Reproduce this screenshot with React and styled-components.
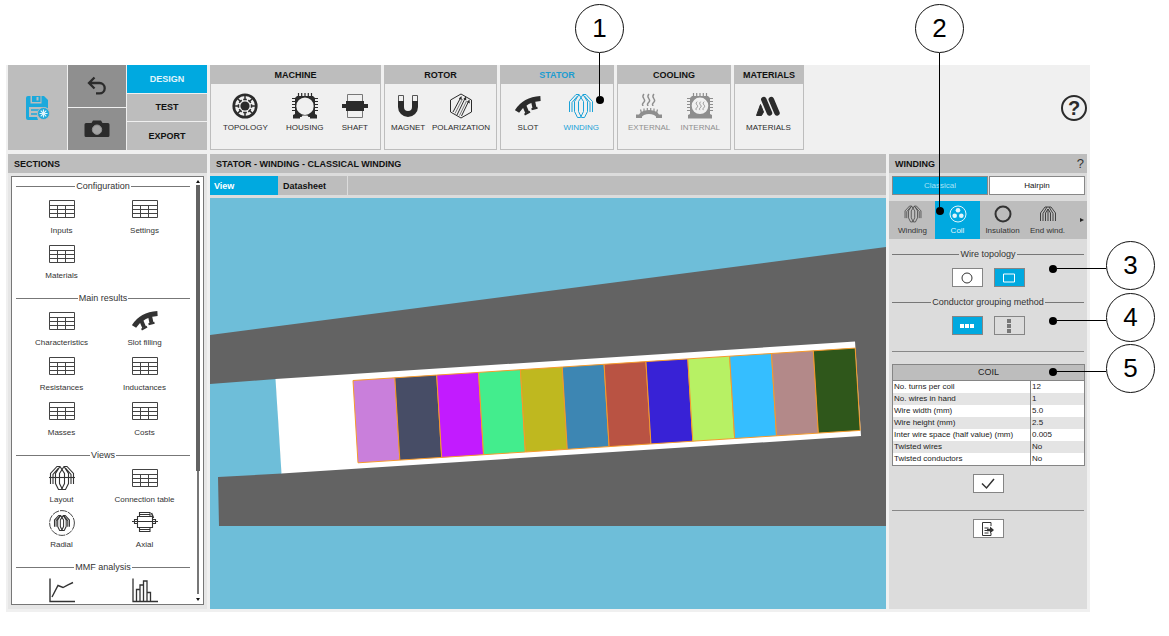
import { useState } from "react";
import styled, { createGlobalStyle } from "styled-components";

const GlobalStyle = createGlobalStyle`
  * {
    box-sizing: border-box;
  }

  body {
    margin: 0;
    background: #fff;
    color: #111;
    font-family: "Liberation Sans", Arial, sans-serif;
    font-size: 8px;
    line-height: 10px;
  }

  button {
    font: inherit;
    color: inherit;
    margin: 0;
    padding: 0;
    border: 0;
    background: none;
    cursor: pointer;
  }

  svg {
    display: block;
    flex: none;
  }
`;

/* ---------- icons ---------- */

const Icon = ({ w = 26, h = 26, children }) => (
  <svg width={w} height={h} viewBox={`0 0 ${w} ${h}`} fill="none" stroke="currentColor" aria-hidden="true">
    {children}
  </svg>
);

const SaveIcon = () => (
  <Icon w={24} h={24}>
    <path fill="currentColor" stroke="none" fillRule="evenodd" d="M2 0h2.500v7.500h11V0H18l4 4v8.500a7 7 0 0 0-4-1.500H3v10h8l1 3H2a2 2 0 0 1-2-2V2a2 2 0 0 1 2-2z" />
    <path fill="currentColor" stroke="none" fillRule="evenodd" d="M6 0h8.500v6H6zM10.500 1v3.500h2V1z" />
    <path strokeWidth="1.500" d="M5 14h8M5 18h6" />
    <circle cx="17.500" cy="17.500" r="6" fill="currentColor" stroke="#bdbdbd" strokeWidth=".8" />
    <path stroke="#e2f5fb" strokeWidth="1.200" d="M17.500 13.500v8M13.500 17.500h8M14.700 14.700l5.600 5.600M20.300 14.700l-5.600 5.600" />
  </Icon>
);

const UndoIcon = () => (
  <Icon w={20} h={20}>
    <path strokeWidth="2.300" d="M7.500 1.500L2 7l5.500 5.500M2 7h10.500a5.200 5.200 0 0 1 0 10.400H9" />
  </Icon>
);

const CameraIcon = () => (
  <Icon w={26} h={18}>
    <path fill="currentColor" stroke="none" d="M2 3h5.500l1.500-2.500h8L18.500 3H24a1.500 1.500 0 0 1 1.500 1.500v11A1.500 1.500 0 0 1 24 17H2A1.500 1.500 0 0 1 .5 15.500v-11A1.500 1.500 0 0 1 2 3z" />
    <circle cx="13" cy="9.700" r="4.700" fill="#a3a3a3" stroke="#8f8f8f" />
  </Icon>
);

const TopologyIcon = () => (
  <Icon>
    <circle cx="13" cy="13" r="11.300" strokeWidth="2.600" />
    <circle cx="13" cy="13" r="4.600" fill="currentColor" stroke="none" />
    {[0, 45, 90, 135, 180, 225, 270, 315].map((a) => (
      <path key={a} transform={`rotate(${a} 13 13)`} strokeWidth="1.500" d="M13 2v5M11.200 6.500h3.600" />
    ))}
  </Icon>
);

const Fins = () => (
  <path strokeWidth="1.200" d="M6.500 0v4M9.700 0v4M13 0v4M16.300 0v4M19.500 0v4M0 5.500h4M0 8.500h4M0 11.500h4M0 14.500h4M0 17.500h4M22 5.500h4M22 8.500h4M22 11.500h4M22 14.500h4M22 17.500h4" />
);

const HousingIcon = () => (
  <Icon>
    <path fill="currentColor" stroke="none" fillRule="evenodd" d="M5 3h16l2 2v16l2 1v3.500h-7V24h-1.500l-1-1.500h-5L9.500 24H8v1.500H1V22l2-1V5zM13 4.500a8.700 8.700 0 1 0 0 17.400 8.700 8.700 0 0 0 0-17.400z" />
    <Fins />
  </Icon>
);

const ShaftIcon = () => (
  <Icon>
    <path strokeWidth="1" d="M5.500 1.500h15v23h-15z" stroke="#777" />
    <path fill="currentColor" stroke="none" d="M4 8h18v3h4v4h-4v3H4v-3H0v-4h4z" />
  </Icon>
);

const MagnetIcon = () => (
  <Icon w={22}>
    <path fill="currentColor" stroke="none" d="M1 8h6v6a4 4 0 0 0 8 0V8h6v6a10 10 0 0 1-20 0z" />
    <path stroke="#555" strokeWidth="1" d="M1.500 8V2.500h5V8M15.500 8V2.500h5V8" />
  </Icon>
);

const PolarizationIcon = () => (
  <Icon w={24}>
    <path strokeWidth="1" d="M12 1l10.500 6v12L12 25 1.500 19V7z" />
    <path strokeWidth="1" d="M4 19L11.500 5M8 22L16 5.500M12.500 23L19.500 8.500" />
    <path strokeWidth=".6" d="M6 20.500L13.500 6M10.500 22.500L17.500 8" />
    <path fill="currentColor" stroke="none" d="M12.500 3l.3 4-3-1.500zM17 3.500l.3 4-3-1.500zM20.500 6.500l.3 4-3-1.500z" />
  </Icon>
);

const SlotIcon = () => (
  <Icon>
    <path strokeWidth="5" d="M2 18.500Q9.500 6.500 25.500 5.500" />
    <path strokeWidth="4" d="M9 12l3.200 7.500M18 8l1.500 7" />
    <path strokeWidth="2" d="M9.500 21.700l5.500-3M16.500 16.200l6-1.500" />
  </Icon>
);

// two interleaved coils, the right one mirrors the left one
const coilPath = "M1.500 19V8.500L8 1.500h3l4.500 7v10L12.500 24.500h-3l-3-6v-10L11 1.500M4 19V9.500L9.500 3";

const WindingIcon = ({ size = 26, weight = 1 }) => (
  <svg width={size} height={size} viewBox="0 0 26 26" fill="none" stroke="currentColor" strokeWidth={weight} aria-hidden="true">
    <path d={coilPath} />
    <path d={coilPath} transform="translate(26 0) scale(-1 1)" />
  </svg>
);

const Steam = ({ d = "" }) => (
  <g transform={d} strokeWidth="1.400">
    <path d="M8 1c-4 4 3 5 0 8s-1 3-1 4M13 1c-4 4 3 5 0 8s-1 3-1 4M18 1c-4 4 3 5 0 8s-1 3-1 4" />
  </g>
);

const ExternalIcon = () => (
  <Icon>
    <Steam />
    <path fill="currentColor" stroke="none" d="M0 21.500h3l2-2.500q8-4 16 0l2 2.500h3V25h-6v-1.500l-2-1.500q-5-2-10 0l-2 1.500V25H0z" />
    <path strokeWidth="1.200" d="M4.500 16.500l1 3.500M8 15.500V19M11.300 15v4M14.700 15v4M18 15.500V19M21.500 16.500l-1 3.500" />
  </Icon>
);

const InternalIcon = () => (
  <Icon>
    <path fill="currentColor" stroke="none" fillRule="evenodd" d="M5 3h16l2 2v16l2 1v3.500H1V22l2-1V5zM13 4.500a8.300 8.300 0 1 0 0 16.600 8.300 8.300 0 0 0 0-16.600z" />
    <Fins />
    <Steam d="translate(4.500 8) scale(.7)" />
  </Icon>
);

const MaterialsIcon = () => (
  <Icon>
    <path strokeWidth="5.500" strokeLinecap="round" d="M8.800 6.500L14.500 20M16.300 6.500L22 20" />
    <path fill="currentColor" strokeLinejoin="round" d="M5.500 11.500l3 7.500-2 3.500H1.500z" />
  </Icon>
);

const TableIcon = () => (
  <Icon w={26} h={18}>
    <path d="M.5.5h25v17H.5zM.5 5.500h25M.5 9.500h25M.5 13.500h25M8.500 5.500v12M16.500 5.500v12" stroke="#444" />
  </Icon>
);

const LayoutIcon = () => (
  <Icon>
    <g strokeWidth="1.100">
      <path d={coilPath} />
      <path d={coilPath} transform="translate(26 0) scale(-1 1)" />
      <path d="M0 12.500h26" />
    </g>
  </Icon>
);

const RadialIcon = () => (
  <Icon>
    <circle cx="13" cy="13" r="12.400" strokeWidth=".9" strokeDasharray="7 1" />
    <g transform="translate(4.500 4.500) scale(.65)" strokeWidth="1.600">
      <path d={coilPath} />
      <path d={coilPath} transform="translate(26 0) scale(-1 1)" />
    </g>
  </Icon>
);

const AxialIcon = () => (
  <Icon>
    <path strokeWidth="1.100" d="M5.500 6.500h15v11h-15zM7.500 6.500v-4h10.500v4M7.500 17.500v4h10.500v-4M7.500 4.500h10.500M7.500 19.500h10.500M5.500 9.500h-3v4h3M20.500 9.500h3v4h-3M0 11.500h26" />
    <path strokeWidth="1.500" d="M19.500 3l2 5" />
  </Icon>
);

const LineChartIcon = () => (
  <Icon>
    <path strokeWidth="1.400" d="M1 1.500v23h25" />
    <path strokeWidth="1.400" d="M3 20L9 8.500l5 2 5-2.700 5-2.300" />
  </Icon>
);

const BarChartIcon = () => (
  <Icon>
    <path strokeWidth="1.300" d="M1 1.500v23h25M4.500 24V12.500H8V24M8 12.500V8h3.500v16M11.500 8V4H15v20M15 15.500h3.500V24" />
  </Icon>
);

const CoilIcon = () => (
  <Icon w={18} h={18}>
    <circle cx="9" cy="9" r="8" />
    <circle cx="9" cy="5.300" r="2.300" fill="currentColor" stroke="none" />
    <circle cx="5.700" cy="10.800" r="2.300" fill="currentColor" stroke="none" />
    <circle cx="12.300" cy="10.800" r="2.300" fill="currentColor" stroke="none" />
  </Icon>
);

const InsulationIcon = () => (
  <Icon w={18} h={18}>
    <circle cx="9" cy="9" r="7.500" strokeWidth="2" />
  </Icon>
);

const EndWindingIcon = () => (
  <Icon w={18} h={18}>
    <path strokeWidth=".9" d="M1.500 16V8L6 2h6l4.500 6v8M4 16V8.500L8 2M14 16V8.500L10 2M6.500 16V8L9 4l2.500 4v8M9 16V4" />
  </Icon>
);

/* ---------- page frame ---------- */

const Page = styled.div`
  display: flex;
  height: 100vh;
  padding: 65px 79px 24px 6px;
`;

const Workbench = styled.main`
  flex: 1;
  min-width: 0;
  display: flex;
  flex-direction: column;
  gap: 4px;
  padding: 0 3px 3px 2px;
  background: #f0f0f0;
`;

const TopBar = styled.header`
  display: flex;
  gap: 3px;
  height: 85px;
`;

const FileTools = styled.div`
  display: grid;
  grid-template-columns: 59px 58px 80px;
  gap: 1px;
  width: 199px;
`;

const Stack = styled.div`
  display: grid;
  grid-auto-rows: 1fr;
  gap: 1px;
`;

const FileButton = styled.button`
  display: flex;
  align-items: center;
  justify-content: center;
  background: ${(p) => (p.$dark ? "#8f8f8f" : "#bdbdbd")};
  color: ${(p) => (p.$dark ? "#2b2b2b" : "#1ba9dc")};
`;

const ModeButton = styled.button`
  font-size: 9px;
  font-weight: bold;
  background: ${(p) => (p.$active ? "#00a9e0" : "#bdbdbd")};
  color: ${(p) => (p.$active ? "#e2f5fb" : "#111")};
`;

const Group = styled.section`
  position: relative;
  width: ${(p) => p.$width}px;
  border: 1px solid #bdbdbd;
`;

const GroupTitle = styled.h2`
  margin: 0;
  height: 18px;
  background: #bdbdbd;
  color: ${(p) => (p.$active ? "#1c9cd0" : "#111")};
  font-size: 9px;
  line-height: 18px;
  text-align: center;
`;

const GroupItems = styled.div`
  display: flex;
  justify-content: space-between;
  padding: 9px ${(p) => p.$pad}px 0;
`;

const ToolButton = styled.button`
  display: flex;
  flex-direction: column;
  align-items: center;
  gap: 4px;
  color: ${(p) => (p.$active ? "#1ba2d8" : "#2b2b2b")};

  &:disabled {
    color: #8e8e8e;
    cursor: default;
  }
`;

const HelpButton = styled.button`
  align-self: center;
  width: 26px;
  height: 26px;
  margin-left: auto;
  border: 2px solid #2b2b2b;
  border-radius: 50%;
  color: #2b2b2b;
  font-size: 20px;
  font-weight: bold;
  line-height: 22px;
`;

const Columns = styled.div`
  flex: 1;
  min-height: 0;
  display: grid;
  grid-template-columns: 199px minmax(0, 1fr) 198px;
  gap: 3px;
`;

const Panel = styled.section`
  position: relative;
  display: flex;
  flex-direction: column;
  min-height: 0;
  background: ${(p) => p.$bg || "#dcdcdc"};
`;

const PanelTitle = styled.h2`
  display: flex;
  justify-content: space-between;
  align-items: center;
  flex: none;
  height: 19px;
  margin: 0 0 3px;
  padding: 0 3px 0 6px;
  background: #bdbdbd;
  font-size: 9px;
`;

const PanelHelp = styled.button`
  color: #333;
  font-size: 13px;
  font-weight: normal;
`;

/* ---------- sections ---------- */

const SectionBox = styled.div`
  flex: 1;
  min-height: 0;
  display: flex;
  justify-content: space-between;
  margin: 0 3px 4px;
  padding: 3px 2px 3px 4px;
  overflow: hidden;
  border: 1px solid #777;
  background: #fff;
`;

const SectionList = styled.div`
  width: 174px;
`;

const Legend = styled.h3`
  display: flex;
  align-items: center;
  gap: 1px;
  margin: 0;
  font-size: 9px;
  font-weight: normal;
  line-height: 12px;
  color: #333;

  &::before,
  &::after {
    content: "";
    flex: 1;
    height: 1px;
    background: #777;
  }
`;

const SectionGrid = styled.div`
  display: grid;
  grid-template-columns: 1fr 1fr;
  grid-auto-rows: 45px;
  padding: 4px 4px 6px;
`;

const SectionButton = styled.button`
  display: flex;
  flex-direction: column;
  align-items: center;
  color: #333;
`;

const SectionIcon = styled.span`
  display: flex;
  align-items: center;
  height: 26px;
  margin-bottom: 4px;
`;

const ScrollBar = styled.div`
  display: flex;
  flex-direction: column;
  align-items: center;
  width: 6px;
`;

const Arrow = styled.span`
  border: 2px solid transparent;
  border-${(p) => (p.$up ? "bottom" : "top")}: 3px solid #111;
  border-${(p) => (p.$up ? "top" : "bottom")}: 0;
`;

const Thumb = styled.span`
  flex: 7;
  width: 4px;
  margin-top: 2px;
  background: #636363;
`;

const Track = styled.span`
  flex: 3;
  width: 2px;
  margin-bottom: 4px;
  background: #777;
`;

/* ---------- centre view ---------- */

const ViewTabs = styled.div`
  display: flex;
  flex: none;
  height: 19px;
  margin-bottom: 3px;
  background: #bdbdbd;
`;

const ViewTab = styled.button`
  width: 69px;
  padding-left: 4px;
  border-right: 1px solid ${(p) => (p.$active ? "#bdbdbd" : "#dcdcdc")};
  background: ${(p) => (p.$active ? "#00a9e0" : "#bdbdbd")};
  color: ${(p) => (p.$active ? "#fff" : "#111")};
  font-size: 9px;
  font-weight: bold;
  text-align: left;
`;

const Canvas = styled.svg`
  flex: 1;
  width: 100%;
  min-height: 0;
  background: #6ebed9;
`;

/* ---------- winding settings ---------- */

const Segments = styled.div`
  display: grid;
  grid-template-columns: 1fr 1fr;
  gap: 1px;
  height: 19px;
  margin: 0 2px 6px 3px;
`;

const Segment = styled.button`
  border: 1px solid #888;
  background: ${(p) => (p.$active ? "#00a9e0" : "#fff")};
  color: ${(p) => (p.$active ? "#a9e1f5" : "#111")};
`;

const IconTabs = styled.div`
  display: flex;
  height: 38px;
  padding-left: 1px;
  background: #bdbdbd;
`;

const IconTab = styled.button`
  display: flex;
  flex-direction: column;
  align-items: center;
  gap: 3px;
  width: 45px;
  padding-top: 4px;
  background: ${(p) => (p.$active ? "#00a9e0" : "transparent")};
  color: ${(p) => (p.$active ? "#e2f5fb" : "#333")};
`;

const MoreTabs = styled.button`
  display: flex;
  align-items: center;
  justify-content: flex-end;
  flex: 1;
  padding-right: 3px;

  &::before {
    content: "";
    border: 2px solid transparent;
    border-left: 4px solid #222;
    border-right: 0;
  }
`;

const Option = styled.div`
  margin: 0 3px;
  padding-top: 9px;
`;

const ButtonRow = styled.div`
  display: flex;
  justify-content: center;
  gap: 11px;
  padding-top: 8px;
`;

const SmallButton = styled.button`
  display: flex;
  align-items: center;
  justify-content: center;
  width: 31px;
  height: 19px;
  border: 1px solid #858585;
  background: ${(p) => p.$bg || "#fff"};
  color: ${(p) => (p.$bg === "#00a9e0" ? "#fff" : "#333")};
`;

const Rule = styled.hr`
  width: auto;
  margin: ${(p) => p.$top}px 3px 0;
  border: 0;
  border-top: 1px solid #888;
`;

const CoilTable = styled.table`
  margin: 12px 2px 0 3px;
  border: 1px solid #858585;
  border-spacing: 0;
  background: #fff;
  color: #222;

  caption {
    height: 16px;
    border: 1px solid #858585;
    border-bottom: 0;
    background: #bdbdbd;
    font-size: 9px;
    line-height: 15px;
  }

  th,
  td {
    padding: 1px;
    font-weight: normal;
    text-align: left;
  }

  td {
    width: 54px;
    border-left: 1px solid #858585;
  }

  tr:nth-child(even) {
    background: #e4e4e4;
  }
`;

/* ---------- numbered callouts ---------- */

const Callout = styled.div`
  position: absolute;
  z-index: 2;
  top: ${(p) => p.$top}px;
  right: ${(p) => p.$right}px;
  display: flex;
  flex-direction: ${(p) => (p.$down ? "column" : "row-reverse")};
  align-items: center;
  pointer-events: none;
`;

const Bubble = styled.span`
  width: 49px;
  height: 49px;
  border: 1px solid #111;
  border-radius: 50%;
  background: #fff;
  color: #000;
  font-size: 26px;
  line-height: 47px;
  text-align: center;
`;

const Leader = styled.span`
  width: ${(p) => (p.$down ? 1 : 49)}px;
  height: ${(p) => (p.$down ? p.$length : 1)}px;
  margin-top: ${(p) => (p.$down ? 0 : 6)}px;
  background: #000;
`;

const Dot = styled.span`
  width: 8px;
  height: 8px;
  margin-top: ${(p) => (p.$down ? 0 : 6)}px;
  border-radius: 50%;
  background: #000;
`;

const Marker = ({ n, top, right, down, length }) => (
  <Callout $top={top} $right={right} $down={down}>
    <Bubble>{n}</Bubble>
    <Leader $down={down} $length={length} />
    <Dot $down={down} />
  </Callout>
);

/* ---------- data ---------- */

const groups = [
  { title: "MACHINE", width: 171, pad: 12, items: [["TOPOLOGY", TopologyIcon], ["HOUSING", HousingIcon], ["SHAFT", ShaftIcon]] },
  { title: "ROTOR", width: 113, pad: 6, items: [["MAGNET", MagnetIcon], ["POLARIZATION", PolarizationIcon]] },
  { title: "STATOR", width: 114, pad: 14, items: [["SLOT", SlotIcon], ["WINDING", WindingIcon]] },
  { title: "COOLING", width: 114, pad: 10, disabled: true, items: [["EXTERNAL", ExternalIcon], ["INTERNAL", InternalIcon]] },
  { title: "MATERIALS", width: 70, pad: 11, items: [["MATERIALS", MaterialsIcon]] },
];

const sections = [
  { title: "Configuration", items: [["Inputs", TableIcon], ["Settings", TableIcon], ["Materials", TableIcon]] },
  {
    title: "Main results",
    items: [
      ["Characteristics", TableIcon],
      ["Slot filling", SlotIcon],
      ["Resistances", TableIcon],
      ["Inductances", TableIcon],
      ["Masses", TableIcon],
      ["Costs", TableIcon],
    ],
  },
  {
    title: "Views",
    items: [["Layout", LayoutIcon], ["Connection table", TableIcon], ["Radial", RadialIcon], ["Axial", AxialIcon]],
  },
  { title: "MMF analysis", items: [["", LineChartIcon, "Line chart"], ["", BarChartIcon, "Bar chart"]] },
];

const coilRows = [
  ["No. turns per coil", "12"],
  ["No. wires in hand", "1"],
  ["Wire width (mm)", "5.0"],
  ["Wire height (mm)", "2.5"],
  ["Inter wire space (half value) (mm)", "0.005"],
  ["Twisted wires", "No"],
  ["Twisted conductors", "No"],
];

const conductors = [
  "#c97fdb", "#474d66", "#c21bff", "#43ed8d", "#bfb81f", "#3d86b3",
  "#b95343", "#3822d6", "#b7f164", "#35beff", "#b38989", "#2f571b",
];

const SlotDrawing = () => (
  <Canvas viewBox="0 0 676 411" preserveAspectRatio="xMidYMid slice" role="img" aria-label="Slot view">
    <path fill="#636363" d="M0 137L676 49V328H9L8 279L72 275.500L66 181L0 186z" />
    <path fill="#fff" d="M65.500 181L645 143.500L651 238L71.500 275.500z" />
    {conductors.map((color, i) => {
      const x = 143 + i * 41.85;
      const y = 182.5 - i * 2.7;
      return (
        <path
          key={color}
          fill={color}
          stroke="#f59a2c"
          d={`M${x} ${y}l41.850-2.700l5 82.300l-41.850 2.700z`}
        />
      );
    })}
  </Canvas>
);

export default function App() {
  const [mode, setMode] = useState("DESIGN");
  const [view, setView] = useState("View");
  const [type, setType] = useState("Classical");
  const [tab, setTab] = useState("Coil");

  return (
    <>
      <GlobalStyle />
      <Page>
        <Workbench>
          <TopBar>
            <FileTools>
              <FileButton aria-label="Save"><SaveIcon /></FileButton>
              <Stack>
                <FileButton $dark aria-label="Undo"><UndoIcon /></FileButton>
                <FileButton $dark aria-label="Screenshot"><CameraIcon /></FileButton>
              </Stack>
              <Stack>
                {["DESIGN", "TEST", "EXPORT"].map((m) => (
                  <ModeButton key={m} $active={m === mode} onClick={() => setMode(m)}>{m}</ModeButton>
                ))}
              </Stack>
            </FileTools>
            {groups.map((g) => (
              <Group key={g.title} $width={g.width}>
                <GroupTitle $active={g.title === "STATOR"}>{g.title}</GroupTitle>
                <GroupItems $pad={g.pad}>
                  {g.items.map(([label, Glyph]) => (
                    <ToolButton key={label} disabled={g.disabled} $active={label === "WINDING"}>
                      <Glyph />
                      {label}
                    </ToolButton>
                  ))}
                </GroupItems>
                {g.title === "STATOR" && <Marker n={1} top={-62} right={-11} down length={43} />}
              </Group>
            ))}
            <HelpButton aria-label="Help">?</HelpButton>
          </TopBar>

          <Columns>
            <Panel $bg="#e6e6e6">
              <PanelTitle>SECTIONS</PanelTitle>
              <SectionBox>
                <SectionList>
                  {sections.map((s) => (
                    <div key={s.title}>
                      <Legend>{s.title}</Legend>
                      <SectionGrid>
                        {s.items.map(([label, Glyph, hint]) => (
                          <SectionButton key={label || hint} aria-label={label || hint}>
                            <SectionIcon><Glyph /></SectionIcon>
                            {label}
                          </SectionButton>
                        ))}
                      </SectionGrid>
                    </div>
                  ))}
                </SectionList>
                <ScrollBar>
                  <Arrow $up />
                  <Thumb />
                  <Track />
                  <Arrow />
                </ScrollBar>
              </SectionBox>
            </Panel>

            <Panel>
              <PanelTitle>STATOR - WINDING - CLASSICAL WINDING</PanelTitle>
              <ViewTabs>
                {["View", "Datasheet"].map((v) => (
                  <ViewTab key={v} $active={v === view} onClick={() => setView(v)}>{v}</ViewTab>
                ))}
              </ViewTabs>
              <SlotDrawing />
            </Panel>

            <Panel>
              <PanelTitle>
                WINDING
                <PanelHelp aria-label="Winding help">?</PanelHelp>
              </PanelTitle>
              <Segments>
                {["Classical", "Hairpin"].map((t) => (
                  <Segment key={t} $active={t === type} onClick={() => setType(t)}>{t}</Segment>
                ))}
              </Segments>
              <IconTabs>
                <IconTab $active={tab === "Winding"} onClick={() => setTab("Winding")}>
                  <WindingIcon size={18} />
                  Winding
                </IconTab>
                <IconTab $active={tab === "Coil"} onClick={() => setTab("Coil")}>
                  <CoilIcon />
                  Coil
                </IconTab>
                <IconTab $active={tab === "Insulation"} onClick={() => setTab("Insulation")}>
                  <InsulationIcon />
                  Insulation
                </IconTab>
                <IconTab $active={tab === "End wind."} onClick={() => setTab("End wind.")}>
                  <EndWindingIcon />
                  End wind.
                </IconTab>
                <MoreTabs aria-label="More tabs" />
              </IconTabs>
              <Option>
                <Legend>Wire topology</Legend>
                <ButtonRow>
                  <SmallButton aria-label="Round wire">
                    <Icon w={12} h={12}><circle cx="6" cy="6" r="5" /></Icon>
                  </SmallButton>
                  <SmallButton $bg="#00a9e0" aria-label="Rectangular wire">
                    <Icon w={12} h={10}><path d="M.5 1h11v8H.5z" /></Icon>
                  </SmallButton>
                </ButtonRow>
              </Option>
              <Option>
                <Legend>Conductor grouping method</Legend>
                <ButtonRow>
                  <SmallButton $bg="#00a9e0" aria-label="Horizontal grouping">
                    <Icon w={14} h={4}><path strokeWidth="4" strokeDasharray="4 1" d="M0 2h14" /></Icon>
                  </SmallButton>
                  <SmallButton $bg="#dcdcdc" aria-label="Vertical grouping">
                    <Icon w={4} h={14}><path stroke="#777" strokeWidth="4" strokeDasharray="4 1" d="M2 0v14" /></Icon>
                  </SmallButton>
                </ButtonRow>
              </Option>
              <Rule $top={16} />
              <CoilTable>
                <caption>COIL</caption>
                <tbody>
                  {coilRows.map(([name, value]) => (
                    <tr key={name}>
                      <th scope="row">{name}</th>
                      <td>{value}</td>
                    </tr>
                  ))}
                </tbody>
              </CoilTable>
              <ButtonRow>
                <SmallButton aria-label="Apply">
                  <Icon w={14} h={12}><path strokeWidth="1.500" d="M1 5.500L5.500 10 13 1" /></Icon>
                </SmallButton>
              </ButtonRow>
              <Rule $top={17} />
              <ButtonRow>
                <SmallButton aria-label="Export data">
                  <Icon w={14} h={14}>
                    <path d="M10 4V.5H1.500v13H10V11M3.500 6h4M3.500 8.500h3M3.500 11h4" />
                    <path fill="currentColor" stroke="none" d="M6 6.700h3V4.500l4 3.500-4 3.500V9.300H6z" />
                  </Icon>
                </SmallButton>
              </ButtonRow>
              <Marker n={2} top={-150} right={123} down length={154} />
              <Marker n={3} top={87} right={-68} />
              <Marker n={4} top={139} right={-68} />
              <Marker n={5} top={190} right={-68} />
            </Panel>
          </Columns>
        </Workbench>
      </Page>
    </>
  );
}
